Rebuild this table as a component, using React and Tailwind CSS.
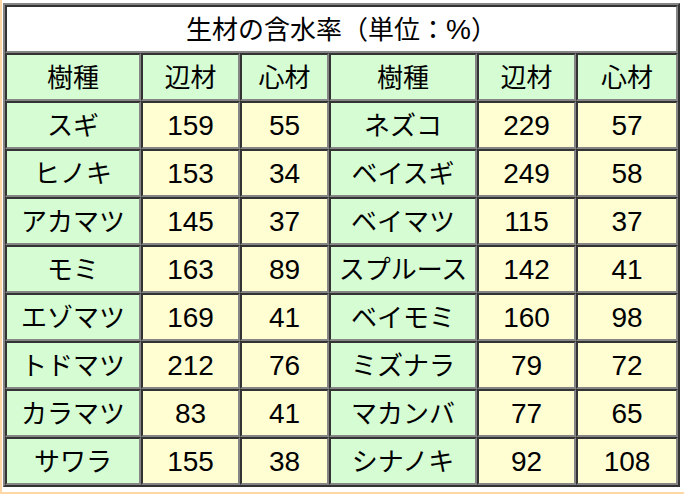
import React from "react";

const rows = [
  ["スギ", "159", "55", "ネズコ", "229", "57"],
  ["ヒノキ", "153", "34", "ベイスギ", "249", "58"],
  ["アカマツ", "145", "37", "ベイマツ", "115", "37"],
  ["モミ", "163", "89", "スプルース", "142", "41"],
  ["エゾマツ", "169", "41", "ベイモミ", "160", "98"],
  ["トドマツ", "212", "76", "ミズナラ", "79", "72"],
  ["カラマツ", "83", "41", "マカンバ", "77", "65"],
  ["サワラ", "155", "38", "シナノキ", "92", "108"],
];

const widths = ["w-[136px]", "w-[99px]", "w-[89px]", "w-[148px]", "w-[99px]", "w-[102px]"];

const cellBase =
  "h-[48px] p-0 pt-[2px] text-center align-middle border-2 border-t-[#333333] border-l-[#333333] border-b-[#858585] border-r-[#858585]";

export default function App() {
  return (
    <div
      className="w-[684px] h-[496px] bg-white"
      style={{ fontFamily: '"Liberation Sans", "Noto Sans CJK JP", sans-serif' }}
    >
      <div className="w-[684px] h-[494px] border-l-2 border-b-2 border-[#ffd6a6] pl-px pt-[3px]">
        <table className="border-separate border-spacing-0 border-2 border-t-[#858585] border-l-[#858585] border-b-[#333333] border-r-[#333333] text-[26px] leading-none text-black">
          <tbody>
            <tr>
              <td colSpan={6} className={`${cellBase} bg-white`}>
                生材の含水率（単位：<span className="text-[28px]">%</span>）
              </td>
            </tr>
            <tr>
              {["樹種", "辺材", "心材", "樹種", "辺材", "心材"].map((h, i) => (
                <td key={i} className={`${cellBase} ${widths[i]} bg-[#d5fcd3]`}>
                  {h}
                </td>
              ))}
            </tr>
            {rows.map((r, ri) => (
              <tr key={ri}>
                {r.map((c, ci) => (
                  <td
                    key={ci}
                    className={`${cellBase} ${widths[ci]} ${
                      ci % 3 === 0 ? "bg-[#d5fcd3]" : "bg-[#fffed3] text-[28px]"
                    }`}
                  >
                    {c}
                  </td>
                ))}
              </tr>
            ))}
          </tbody>
        </table>
      </div>
    </div>
  );
}
